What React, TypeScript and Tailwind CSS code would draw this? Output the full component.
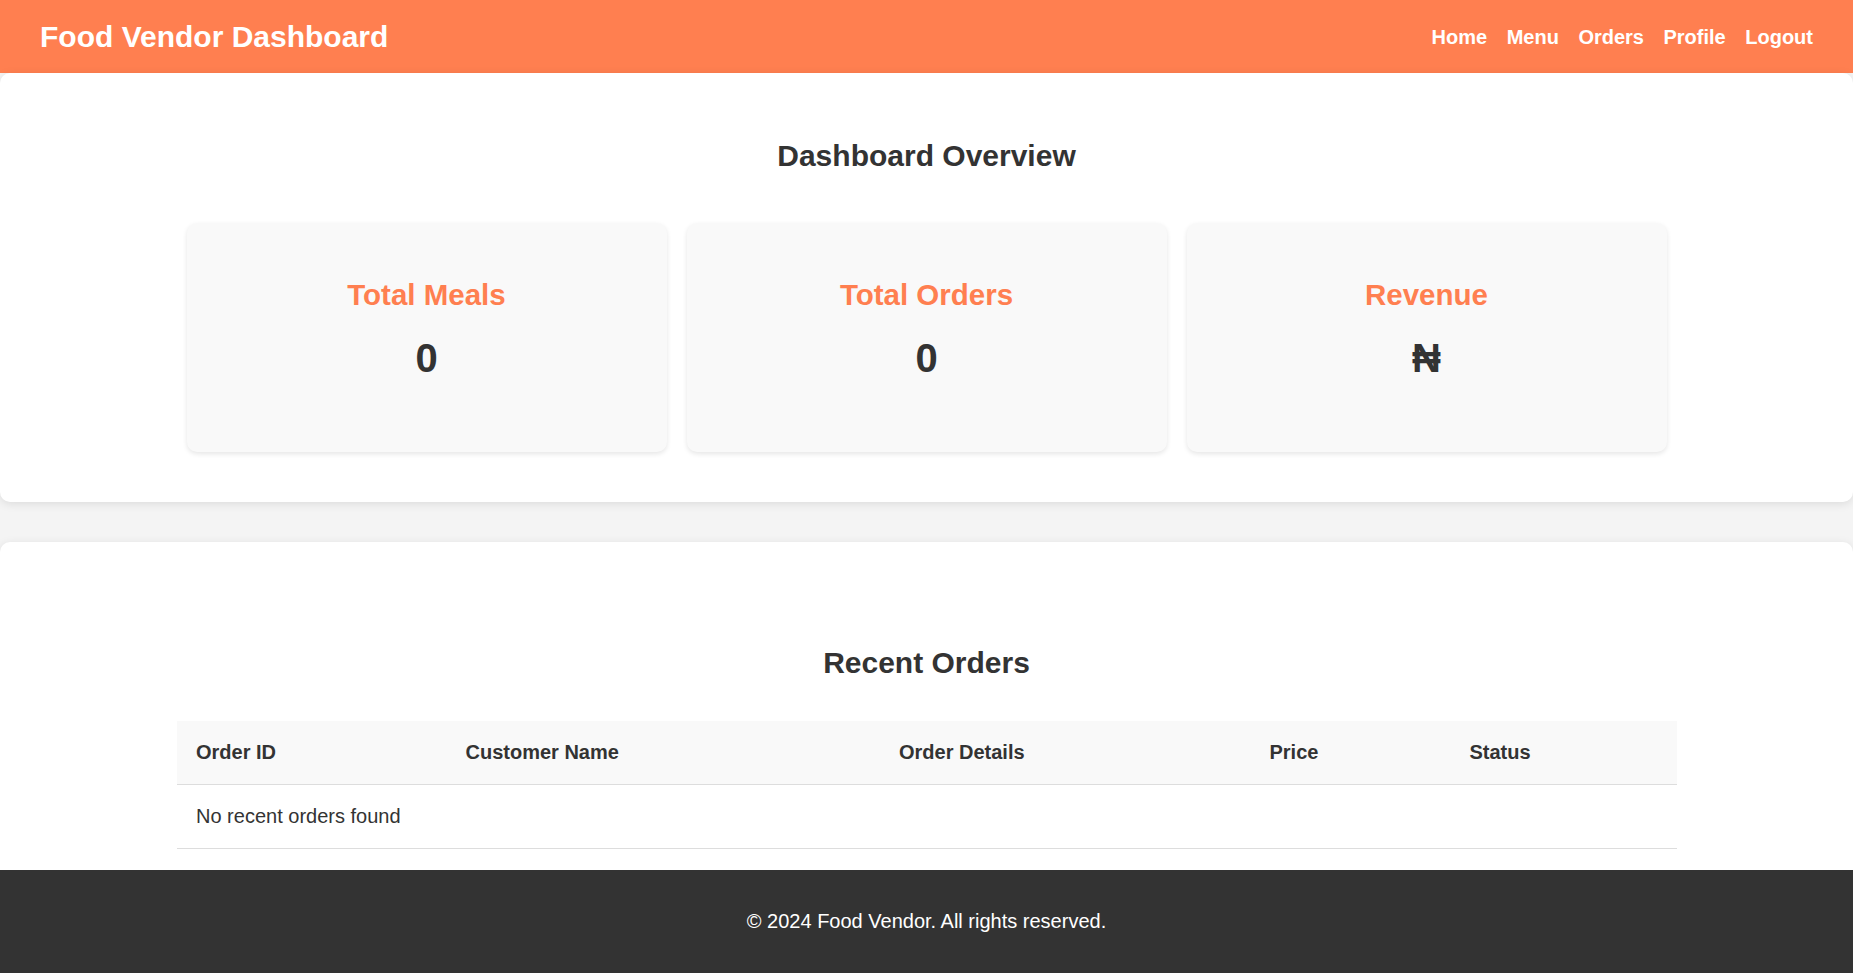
const navLinks = ["Home", "Menu", "Orders", "Profile", "Logout"];

const stats = [
    { label: "Total Meals", value: "0" },
    { label: "Total Orders", value: "0" },
    { label: "Revenue", value: "₦" },
];

const columns = [
    { name: "Order ID", width: "w-[269.5px]" },
    { name: "Customer Name", width: "w-[433.5px]" },
    { name: "Order Details", width: "w-[370.5px]" },
    { name: "Price", width: "w-[200px]" },
    { name: "Status", width: "w-[226.5px]" },
];

export default function App() {
    return (
        <div className="min-h-screen bg-[#f4f4f4] font-['Liberation_Sans',Arial,sans-serif] text-[#333]">
            <header className="flex h-[73px] items-center justify-between bg-[#ff7f50] px-10 text-white">
                <h1 className="text-[30px] font-bold leading-none">Food Vendor Dashboard</h1>

                <nav className="flex">
                    {navLinks.map((link) => (
                        <a key={link} href="#" className="ml-[19.5px] text-[20px] font-bold leading-none text-white">
                            {link}
                        </a>
                    ))}
                </nav>
            </header>

            <section className="rounded-[10px] bg-white pt-[68px] pb-[50px] shadow-[0_2px_10px_rgba(0,0,0,0.1)]">
                <h2 className="text-center text-[30px] font-bold leading-none">Dashboard Overview</h2>

                <div className="mx-auto mt-[52px] flex w-[1500px]">
                    {stats.map((stat) => (
                        <div
                            key={stat.label}
                            className="mx-[10px] flex h-[229px] flex-1 flex-col items-center rounded-[10px] bg-[#f9f9f9] pt-[57px] shadow-[0_2px_5px_rgba(0,0,0,0.1)]"
                        >
                            <h3 className="text-[29.5px] font-bold leading-none text-[#ff7f50]">{stat.label}</h3>
                            <p className="mt-[28px] text-[40px] font-bold leading-none">{stat.value}</p>
                        </div>
                    ))}
                </div>
            </section>

            <section className="mt-10 rounded-t-[10px] bg-white pt-[106px] pb-[21px] shadow-[0_2px_10px_rgba(0,0,0,0.1)]">
                <h2 className="text-center text-[30px] font-bold leading-none">Recent Orders</h2>

                <table className="mx-auto mt-[43px] w-[1500px] table-fixed border-collapse text-left text-[20px]">
                    <colgroup>
                        {columns.map((col) => (
                            <col key={col.name} className={col.width} />
                        ))}
                    </colgroup>
                    <thead>
                        <tr className="bg-[#f9f9f9]">
                            {columns.map((col) => (
                                <th
                                    key={col.name}
                                    className="border-b border-[#ddd] px-[19.5px] py-[20px] font-bold leading-[23px]"
                                >
                                    {col.name}
                                </th>
                            ))}
                        </tr>
                    </thead>
                    <tbody>
                        <tr>
                            <td colSpan={5} className="border-b border-[#ddd] px-[19.5px] py-[20px] leading-[23px]">
                                No recent orders found
                            </td>
                        </tr>
                    </tbody>
                </table>
            </section>

            <footer className="bg-[#333] py-[40px] text-center text-[20px] leading-[23px] text-white">
                © 2024 Food Vendor. All rights reserved.
            </footer>
        </div>
    );
}
